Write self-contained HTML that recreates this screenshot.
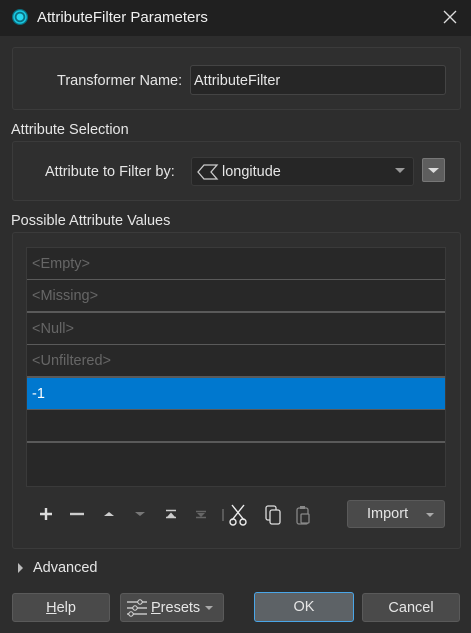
<!DOCTYPE html>
<html><head><style>
*{box-sizing:border-box;margin:0;padding:0}
body{width:471px;height:633px;background:#2d2d2d;font-family:"Liberation Sans",sans-serif;font-size:14.5px;color:#e6e6e6;position:relative;overflow:hidden}
.a{position:absolute}
.grp{position:absolute;border:1px solid #3b3b3b;border-radius:3px;background:#2f2f2f}
.btn{position:absolute;background:#4a4a4a;border:1px solid #5a5a5a;border-radius:3px;text-align:center;line-height:28px;color:#e6e6e6}
.row{position:absolute;left:27px;width:418px;height:32px;line-height:32px;padding-left:5px;color:#666;border-bottom:1px solid #5a5a5a;background:#282828}
</style></head><body>
<div class="a" style="left:0;top:0;width:471px;height:36px;background:#202020"></div>
<svg class="a" style="left:11px;top:8px" width="18" height="18"><circle cx="9" cy="9" r="8" fill="#0a6f80"/><circle cx="9" cy="9" r="6" fill="none" stroke="#19c6e0" stroke-width="1.5"/><circle cx="9" cy="9" r="3.5" fill="#29d8f0"/></svg>
<div class="a" style="left:37px;top:9px;font-size:15px;color:#f0f0f0">AttributeFilter Parameters</div>
<svg class="a" style="left:443px;top:10px" width="14" height="14"><path d="M1 1L13 13M13 1L1 13" stroke="#ddd" stroke-width="1.3"/></svg>

<div class="grp" style="left:12px;top:47px;width:449px;height:63px"></div>
<div class="a" style="left:57px;top:73px">Transformer Name:</div>
<div class="a" style="left:190px;top:65px;width:256px;height:30px;background:#262626;border:1px solid #444;border-radius:3px;padding:7px 3px">AttributeFilter</div>

<div class="a" style="left:11px;top:122px">Attribute Selection</div>
<div class="grp" style="left:12px;top:141px;width:449px;height:60px"></div>
<div class="a" style="left:45px;top:164px">Attribute to Filter by:</div>
<div class="a" style="left:191px;top:157px;width:223px;height:29px;background:#262626;border:1px solid #3a3a3a;border-radius:3px"></div>
<svg class="a" style="left:197px;top:164px" width="22" height="16"><path d="M20 1H7L1 8L7 15H20L14 8Z" fill="none" stroke="#ccc" stroke-width="1.3"/></svg>
<div class="a" style="left:222px;top:164px">longitude</div>
<svg class="a" style="left:395px;top:168px" width="10" height="6"><path d="M0 0H10L5 5Z" fill="#999"/></svg>
<div class="a" style="left:422px;top:158px;width:23px;height:24px;background:#5e5e5e;border:1px solid #777;border-radius:2px"></div>
<svg class="a" style="left:428px;top:168px" width="11" height="6"><path d="M0 0H11L5.5 5Z" fill="#ddd"/></svg>

<div class="a" style="left:11px;top:213px">Possible Attribute Values</div>
<div class="grp" style="left:12px;top:232px;width:449px;height:317px"></div>
<div class="a" style="left:26px;top:247px;width:420px;height:240px;background:#282828;border:1px solid #3a3a3a"></div>
<div class="row" style="top:248px">&lt;Empty&gt;</div>
<div class="row" style="top:280px;border-bottom-width:2px;height:33px">&lt;Missing&gt;</div>
<div class="row" style="top:313px">&lt;Null&gt;</div>
<div class="row" style="top:345px;border-bottom-width:2px;height:33px">&lt;Unfiltered&gt;</div>
<div class="row" style="top:378px;background:#0078cf;color:#fff;border-bottom-width:1px">-1</div>
<div class="row" style="top:410px;border-bottom-width:2px;height:33px"></div>

<svg class="a" style="left:30px;top:503px" width="300" height="24">
<path d="M16 5V17M10 11H22" stroke="#ddd" stroke-width="2.4"/>
<path d="M40 11H54" stroke="#ccc" stroke-width="2.4"/>
<path d="M74 13L79 9L84 13Z" fill="#ccc"/>
<path d="M105 9L110 13L115 9Z" fill="#777"/>
<path d="M136 7.5H146" stroke="#ccc" stroke-width="1.5"/><path d="M137 14L141 9.5L145 14Z" fill="#ccc"/><path d="M136 14.5H146" stroke="#ccc" stroke-width="1.5"/>
<path d="M166 8.5H176" stroke="#666" stroke-width="1.5"/><path d="M167 10L171 14L175 10Z" fill="#666"/><path d="M166 14.5H176" stroke="#666" stroke-width="1.5"/>
<path d="M193 6V18" stroke="#777" stroke-width="1.2"/>
<path d="M202 2L214 17M214 2L202 17" stroke="#eee" stroke-width="1.4"/>
<circle cx="203" cy="19" r="3" fill="none" stroke="#eee" stroke-width="1.4"/><circle cx="213" cy="19" r="3" fill="none" stroke="#eee" stroke-width="1.4"/>
<rect x="236" y="3" width="10" height="14" rx="2" fill="none" stroke="#ddd" stroke-width="1.3"/>
<rect x="240" y="7" width="10" height="14" rx="2" fill="#2f2f2f" stroke="#ddd" stroke-width="1.3"/>
<rect x="267" y="5" width="11" height="16" rx="2" fill="none" stroke="#888" stroke-width="1.3"/>
<rect x="270" y="3" width="5" height="3" fill="#888"/>
<rect x="271" y="11" width="8" height="9" rx="1" fill="#2f2f2f" stroke="#888" stroke-width="1.3"/>
</svg>
<div class="btn" style="left:347px;top:500px;width:98px;height:28px;text-align:left;padding-left:19px;line-height:27px">Import</div>
<svg class="a" style="left:426px;top:513px" width="8" height="5"><path d="M0 0H8L4 4Z" fill="#aaa"/></svg>

<svg class="a" style="left:18px;top:563px" width="6" height="10"><path d="M0 0L5 5L0 10Z" fill="#bbb"/></svg>
<div class="a" style="left:33px;top:560px">Advanced</div>

<div class="btn" style="left:12px;top:593px;width:98px;height:29px"><u>H</u>elp</div>
<div class="btn" style="left:120px;top:593px;width:104px;height:29px;text-align:left;padding-left:30px"><u>P</u>resets</div>
<svg class="a" style="left:126px;top:599px" width="22" height="18"><path d="M1 3H21M1 9H21M1 15H21" stroke="#ddd" stroke-width="1.3"/><circle cx="14" cy="3" r="2.2" fill="#4a4a4a" stroke="#ddd"/><circle cx="9" cy="9" r="2.2" fill="#4a4a4a" stroke="#ddd"/><circle cx="5" cy="15" r="2.2" fill="#4a4a4a" stroke="#ddd"/></svg>
<svg class="a" style="left:205px;top:606px" width="8" height="5"><path d="M0 0H8L4 4Z" fill="#aaa"/></svg>
<div class="btn" style="left:254px;top:592px;width:100px;height:30px;background:#5d6266;border-color:#4aa6e8;line-height:29px">OK</div>
<div class="btn" style="left:362px;top:593px;width:98px;height:29px">Cancel</div>
</body></html>
